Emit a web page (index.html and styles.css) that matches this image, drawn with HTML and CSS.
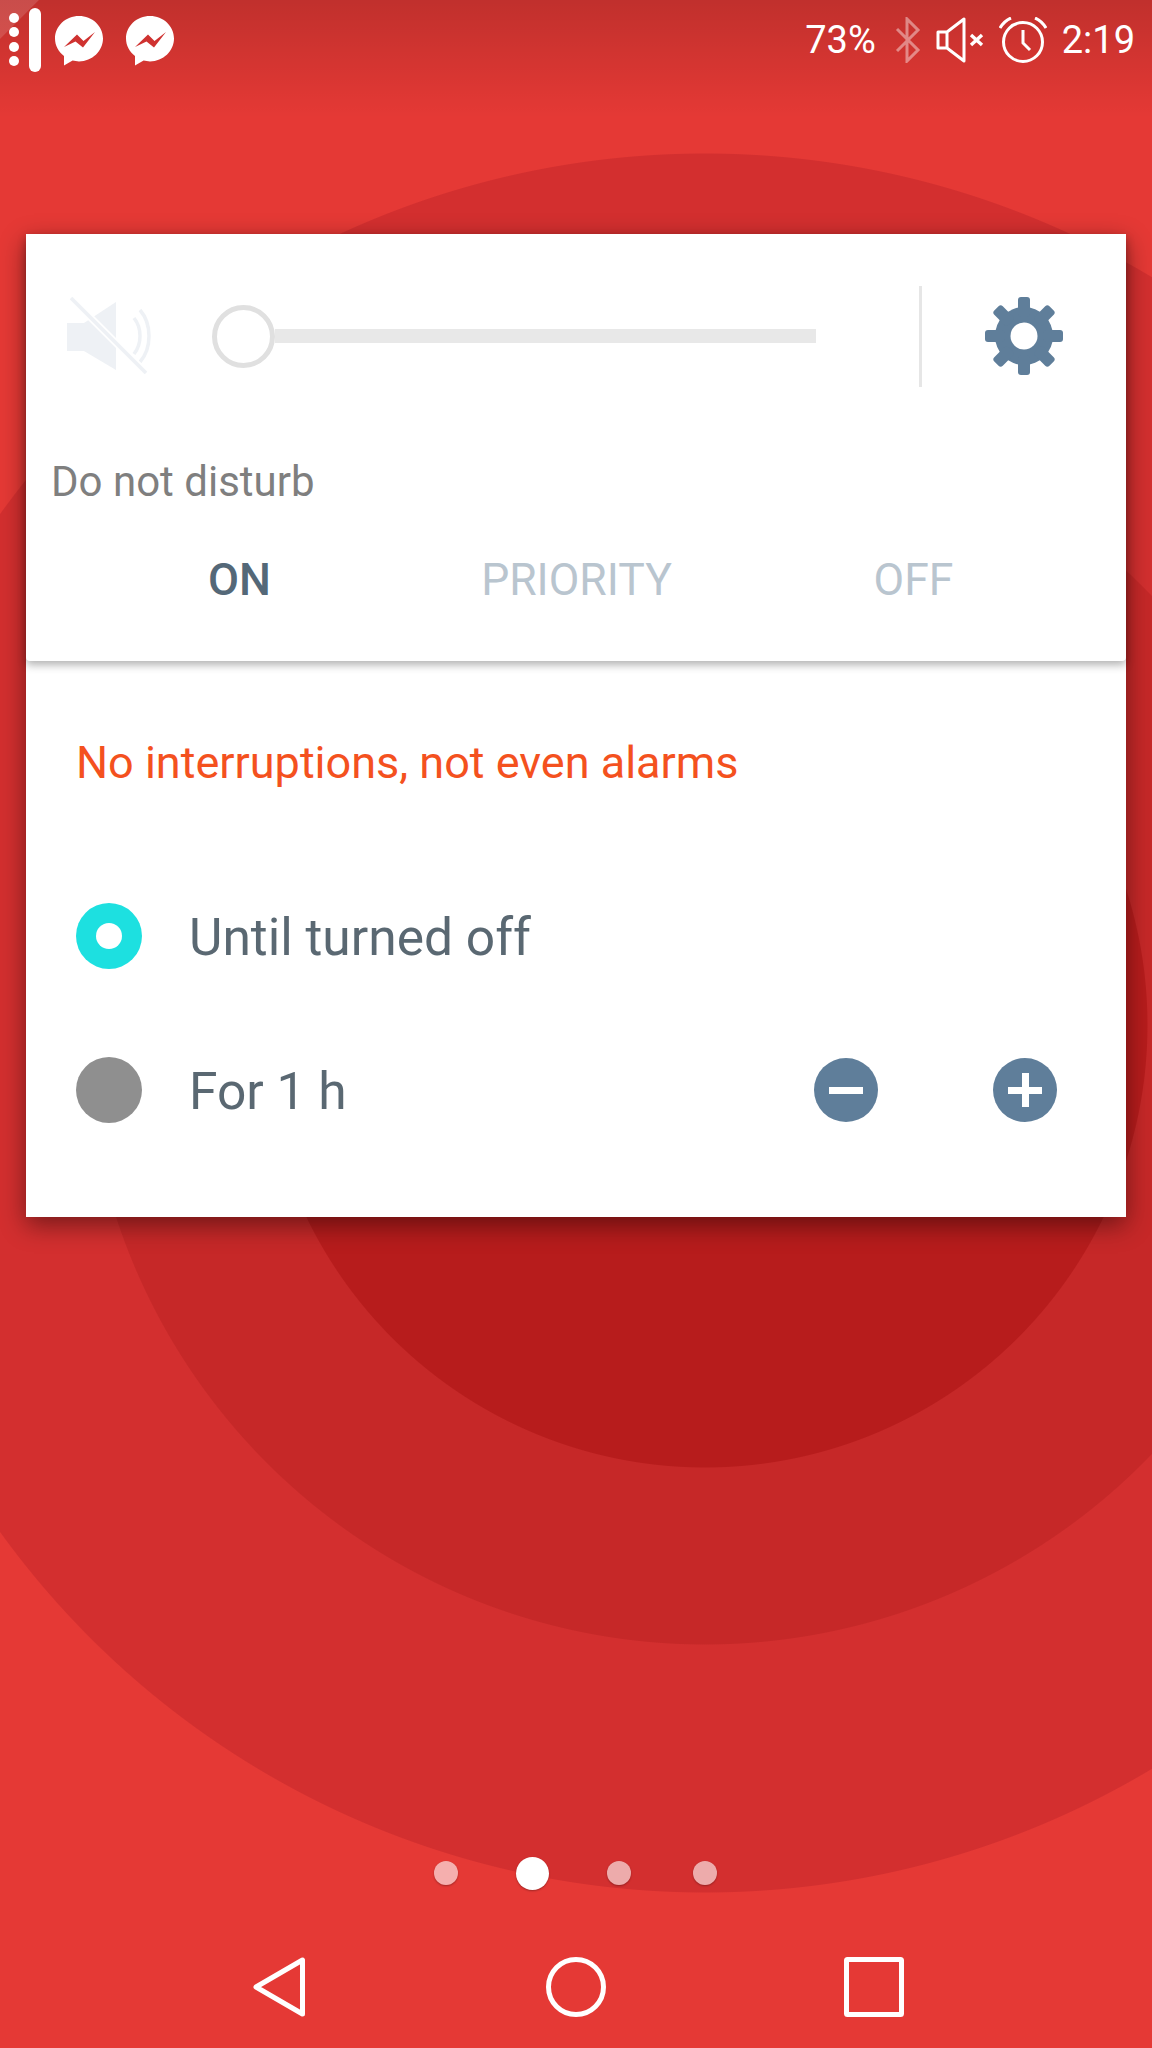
FILE: index.html
```html
<!DOCTYPE html>
<html lang="en">
<head>
    <meta charset="UTF-8">
    <meta name="viewport" content="width=device-width, initial-scale=1.0">
    <title>Do not disturb</title>
    <link rel="stylesheet" href="styles.css">
</head>
<body>
    <div class="screen">
        <div class="status">
            <div class="status-left">
                <div class="handle-dots"><span></span><span></span><span></span><span></span></div>
                <div class="handle-pill"></div>
                <svg class="messenger" viewBox="0 0 48 50">
                    <path fill="#fff" d="M24 0C10.8 0 0 10 0 22.5 0 29.6 3.5 35.8 9 39.9V49.5L17.6 44.6C19.6 45.1 21.8 45.4 24 45.4 37.2 45.4 48 35 48 22.5 48 10 37.2 0 24 0Z"/>
                    <path fill="#cf3230" d="M9 31 22 18.500 28.500 25 40 16 28 31.500 20.500 25.500Z"/>
                </svg>
                <svg class="messenger messenger-2" viewBox="0 0 48 50">
                    <path fill="#fff" d="M24 0C10.8 0 0 10 0 22.5 0 29.6 3.5 35.8 9 39.9V49.5L17.6 44.6C19.6 45.1 21.8 45.4 24 45.4 37.2 45.4 48 35 48 22.5 48 10 37.2 0 24 0Z"/>
                    <path fill="#cf3230" d="M9 31 22 18.500 28.500 25 40 16 28 31.500 20.500 25.500Z"/>
                </svg>
            </div>
            <div class="status-right">
                <span class="status-text">73%</span>
                <svg class="ic-bt" viewBox="0 0 26 46">
                    <path fill="none" stroke="#fff" stroke-opacity=".42" stroke-width="3" d="M2 12 23 33 12 44V2L23 13 2 34"/>
                </svg>
                <svg class="ic-mute" viewBox="0 0 48 46">
                    <path fill="none" stroke="#fff" stroke-width="3" stroke-linejoin="round" d="M2 15H11L28 2V44L11 31H2ZM11 15V31"/>
                    <path fill="none" stroke="#fff" stroke-width="3.4" d="M35 18 46 28M46 18 35 28"/>
                </svg>
                <svg class="ic-alarm" viewBox="0 0 48 46">
                    <circle cx="24" cy="25" r="19.5" fill="none" stroke="#fff" stroke-width="3"/>
                    <path fill="none" stroke="#fff" stroke-width="3" d="M24 13V26L31 33"/>
                    <path fill="none" stroke="#fff" stroke-width="3" d="M1 11C4 6 7 3 12 1M47 11C44 6 41 3 36 1"/>
                </svg>
                <span class="status-text time">2:19</span>
            </div>
        </div>

        <div class="card">
            <div class="panel">
                <div class="volume-row">
                    <svg class="ic-muted" viewBox="0 0 90 80">
                        <path fill="#eef1f5" d="M1 27H18L50 6V74L18 55H1Z"/>
                        <path fill="none" stroke="#eef1f5" stroke-width="3.500" d="M68 22C76 32 76 48 68 58M74 14C86 28 86 52 74 66"/>
                        <path fill="none" stroke="#fff" stroke-width="7" d="M10 7 80 77"/>
                        <path fill="none" stroke="#eef1f5" stroke-width="3.5" d="M5 2 80 77"/>
                    </svg>
                    <div class="slider">
                        <div class="thumb"></div>
                        <div class="track"></div>
                    </div>
                    <div class="divider"></div>
                    <svg class="ic-gear" viewBox="-40 -40 80 80">
                        <g fill="#5f7e9a">
                            <circle r="29"/>
                            <rect x="-6" y="-39" width="12" height="20" rx="3"/>
                            <rect x="-6" y="-39" width="12" height="20" rx="3" transform="rotate(45)"/>
                            <rect x="-6" y="-39" width="12" height="20" rx="3" transform="rotate(90)"/>
                            <rect x="-6" y="-39" width="12" height="20" rx="3" transform="rotate(135)"/>
                            <rect x="-6" y="-39" width="12" height="20" rx="3" transform="rotate(180)"/>
                            <rect x="-6" y="-39" width="12" height="20" rx="3" transform="rotate(225)"/>
                            <rect x="-6" y="-39" width="12" height="20" rx="3" transform="rotate(270)"/>
                            <rect x="-6" y="-39" width="12" height="20" rx="3" transform="rotate(315)"/>
                        </g>
                        <circle r="13.5" fill="#fff"/>
                    </svg>
                </div>
                <div class="dnd-label">Do not disturb</div>
                <div class="tabs">
                    <div class="tab active">ON</div>
                    <div class="tab">PRIORITY</div>
                    <div class="tab">OFF</div>
                </div>
            </div>
            <div class="details">
                <div class="warning">No interruptions, not even alarms</div>
                <div class="option">
                    <div class="radio checked"></div>
                    <div class="option-label">Until turned off</div>
                </div>
                <div class="option">
                    <div class="radio"></div>
                    <div class="option-label">For 1 h</div>
                    <div class="round-btn minus"></div>
                    <div class="round-btn plus"></div>
                </div>
            </div>
        </div>

        <div class="pager">
            <span class="dot"></span>
            <span class="dot active"></span>
            <span class="dot"></span>
            <span class="dot"></span>
        </div>

        <div class="navbar">
            <svg class="nav-back" viewBox="0 0 52 60">
                <path fill="none" stroke="#fff" stroke-width="5" stroke-linejoin="round" d="M3 30 49.500 3V57Z"/>
            </svg>
            <svg class="nav-home" viewBox="0 0 60 60">
                <circle cx="30" cy="30" r="27.500" fill="none" stroke="#fff" stroke-width="5"/>
            </svg>
            <svg class="nav-recent" viewBox="0 0 60 60">
                <rect x="2.500" y="2.500" width="55" height="55" rx="1" fill="none" stroke="#fff" stroke-width="5"/>
            </svg>
        </div>
    </div>
</body>
</html>
```

FILE: styles.css
```css
* {
    box-sizing: border-box;
}
body {
    margin: 0;
    font-family: Roboto, "Liberation Sans", sans-serif;
}
.screen {
    width: 1152px;
    height: 2048px;
    overflow: hidden;
    display: flex;
    flex-direction: column;
    background:
        radial-gradient(circle at 705px 1025px,
            #b71c1c 442px, #c62828 443px,
            #c62828 619px, transparent 620px),
        radial-gradient(circle at 705px 1023px,
            #d32f2f 869px, #e53935 870px);
}

/* status bar */
.status {
    height: 118px;
    padding: 0 17px 38px 9px;
    display: flex;
    justify-content: space-between;
    align-items: center;
    color: #fff;
    background:
        linear-gradient(135deg, rgba(255, 255, 255, 0.14) 27px, transparent 28px),
        linear-gradient(to bottom, rgba(0, 0, 0, 0.16), rgba(0, 0, 0, 0));
}
.status-left, .status-right {
    display: flex;
    align-items: center;
}
.handle-dots {
    display: flex;
    flex-direction: column;
    gap: 4.500px;
    margin-top: -1px;
}
.handle-dots span {
    width: 10px;
    height: 10px;
    border-radius: 50%;
    background: #fff;
}
.handle-pill {
    width: 12px;
    height: 64px;
    margin-left: 10px;
    border-radius: 6px;
    background: #fff;
}
.messenger {
    width: 48px;
    height: 50px;
    margin-left: 14px;
    margin-top: 2px;
}
.messenger-2 {
    margin-left: 23px;
}
.status-text {
    font-size: 38px;
}
.ic-bt {
    width: 26px;
    height: 46px;
    margin-left: 19px;
}
.ic-mute {
    width: 48px;
    height: 46px;
    margin-left: 15px;
}
.ic-alarm {
    width: 48px;
    height: 46px;
    margin-left: 15px;
}
.time {
    margin-left: 15px;
}

/* card */
.card {
    margin: 116px 26px 0;
    height: 983px;
    background: #fff;
    box-shadow: 0 8px 24px rgba(0, 0, 0, 0.45);
}
.panel {
    height: 427px;
    padding: 0 45px 0 26px;
    border-radius: 0 0 4px 4px;
    box-shadow: 0 4px 8px rgba(0, 0, 0, 0.3);
}
.volume-row {
    height: 204px;
    display: flex;
    align-items: center;
}
.ic-muted {
    width: 90px;
    height: 80px;
    margin-left: 14px;
}
.slider {
    margin-left: 56px;
    width: 604px;
    display: flex;
    align-items: center;
}
.thumb {
    width: 63px;
    height: 63px;
    border: 5px solid #e0e0e0;
    border-radius: 50%;
}
.track {
    flex: 1;
    height: 14px;
    background: #e8e8e8;
}
.divider {
    width: 3px;
    height: 101px;
    margin-left: 103px;
    background: #e6e6e6;
}
.ic-gear {
    width: 80px;
    height: 80px;
    margin-left: 62px;
}
.dnd-label {
    margin-top: 22px;
    margin-left: -1px;
    font-size: 42px;
    line-height: 44px;
    color: #7f7f7f;
}
.tabs {
    display: grid;
    grid-template-columns: repeat(3, 337px);
    margin-top: 52px;
    margin-left: 19px;
}
.tab {
    text-align: center;
    font-size: 44.500px;
    line-height: 48px;
    color: #b9c5cf;
}
.tab.active {
    font-weight: 500;
    font-size: 45px;
    color: #546878;
}
.details {
    padding: 0 69px 0 50px;
}
.warning {
    padding-top: 78px;
    font-size: 45px;
    line-height: 48px;
    color: #f4511e;
}
.option {
    display: flex;
    align-items: center;
    height: 66px;
    margin-top: 88px;
}
.warning + .option {
    margin-top: 116px;
}
.radio {
    width: 66px;
    height: 66px;
    border-radius: 50%;
    background: #8f8f8f;
}
.radio.checked {
    background: #1de0e0;
    display: flex;
    align-items: center;
    justify-content: center;
}
.radio.checked::after {
    content: "";
    width: 26px;
    height: 26px;
    border-radius: 50%;
    background: #fff;
}
.option-label {
    flex: 1;
    margin-left: 47px;
    padding-top: 3px;
    font-size: 51.500px;
    color: #5a6872;
}
.round-btn {
    width: 64px;
    height: 64px;
    border-radius: 50%;
    background: #5f7e9a;
    position: relative;
}
.round-btn + .round-btn {
    margin-left: 115px;
}
.round-btn::before, .plus::after {
    content: "";
    position: absolute;
    left: 15px;
    top: 28.500px;
    width: 34px;
    height: 7px;
    background: #fff;
}
.plus::after {
    left: 28.500px;
    top: 15px;
    width: 7px;
    height: 34px;
}

/* home pager and nav */
.pager {
    margin-top: 639px;
    height: 34px;
    margin-left: 434px;
    display: flex;
    align-items: center;
}
.dot {
    width: 24px;
    height: 24px;
    margin-right: 62px;
    border-radius: 50%;
    background: rgba(255, 255, 255, 0.6);
    box-shadow: 0 1px 2px rgba(0, 0, 0, 0.3);
}
.dot.active {
    width: 33px;
    height: 33px;
    margin-right: 58px;
    margin-left: -4px;
    background: #fff;
}
.navbar {
    margin-top: 67px;
    display: flex;
    align-items: center;
    padding-left: 253px;
}
.nav-back {
    width: 52px;
    height: 60px;
}
.nav-home {
    width: 60px;
    height: 60px;
    margin-left: 241px;
}
.nav-recent {
    width: 60px;
    height: 60px;
    margin-left: 238px;
}
```
